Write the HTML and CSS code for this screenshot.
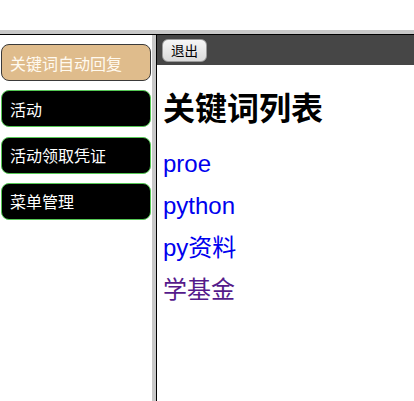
FILE: index.html
```html
<!DOCTYPE html>
<html lang="zh">
<head>
<meta charset="utf-8">
<title>关键词列表</title>
<link rel="stylesheet" href="styles.css">
</head>
<body>
<div class="top"></div>
<div class="hsep"></div>
<div class="main">
  <nav class="left">
    <a class="item active" href="#">关键词自动回复</a>
    <a class="item" href="#">活动</a>
    <a class="item" href="#">活动领取凭证</a>
    <a class="item" href="#">菜单管理</a>
  </nav>
  <div class="vsep"></div>
  <div class="right">
    <div class="bar"><button class="logout">退出</button></div>
    <div class="content">
      <h1 class="title">关键词列表</h1>
      <ul class="links">
        <li><a class="link" href="#">proe</a></li>
        <li><a class="link" href="#">python</a></li>
        <li><a class="link" href="#">py资料</a></li>
        <li><a class="link visited" href="#">学基金</a></li>
      </ul>
    </div>
  </div>
</div>
</body>
</html>
```
FILE: styles.css
```css
html, body {
  margin: 0;
  padding: 0;
  height: 401px;
  overflow: hidden;
  background: #fff;
  font-family: "Liberation Sans", "Noto Sans CJK SC", sans-serif;
}
.top {
  height: 30px;
  background: #fff;
}
.hsep {
  height: 4px;
  background: #c8c8c8;
  border-bottom: 1px solid #000;
}
.main {
  display: flex;
  height: 366px;
}
.left {
  width: 150px;
  padding: 9px 1px 0 1px;
  display: flex;
  flex-direction: column;
  gap: 9.3px;
}
.item {
  display: flex;
  align-items: center;
  height: 37px;
  box-sizing: border-box;
  padding-left: 8px;
  background: #000;
  color: #fff;
  border: 1px solid #55c855;
  border-radius: 8px;
  font-size: 16px;
  text-decoration: none;
}
.item.active {
  background: #dfbc8c;
  border-color: #3a3a3a;
  color: #fffaf0;
}
.vsep {
  width: 4px;
  background: #c8c8c8;
  border-right: 1px solid #000;
}
.right {
  flex: 1;
  display: flex;
  flex-direction: column;
}
.bar {
  height: 30px;
  background: #464646;
  display: flex;
  align-items: center;
  padding-left: 5px;
}
.logout {
  height: 23px;
  padding: 0 8px;
  font-family: "Liberation Sans", "Noto Sans CJK SC", sans-serif;
  font-size: 13.5px;
  color: #000;
  background: linear-gradient(#f6f6f6, #dadada);
  border: 1px solid #9a9a9a;
  border-radius: 6px;
}
.content {
  padding-left: 6px;
}
.title {
  margin: 24px 0 0 0;
  font-size: 32px;
  line-height: 40px;
  font-weight: bold;
  color: #000;
}
.links {
  list-style: none;
  margin: 14px 0 0 0;
  padding: 0;
}
.links li {
  height: 42px;
  line-height: 42px;
}
.link {
  font-size: 24px;
  color: #0000ee;
  text-decoration: none;
}
.link.visited {
  color: #551a8b;
}
```
